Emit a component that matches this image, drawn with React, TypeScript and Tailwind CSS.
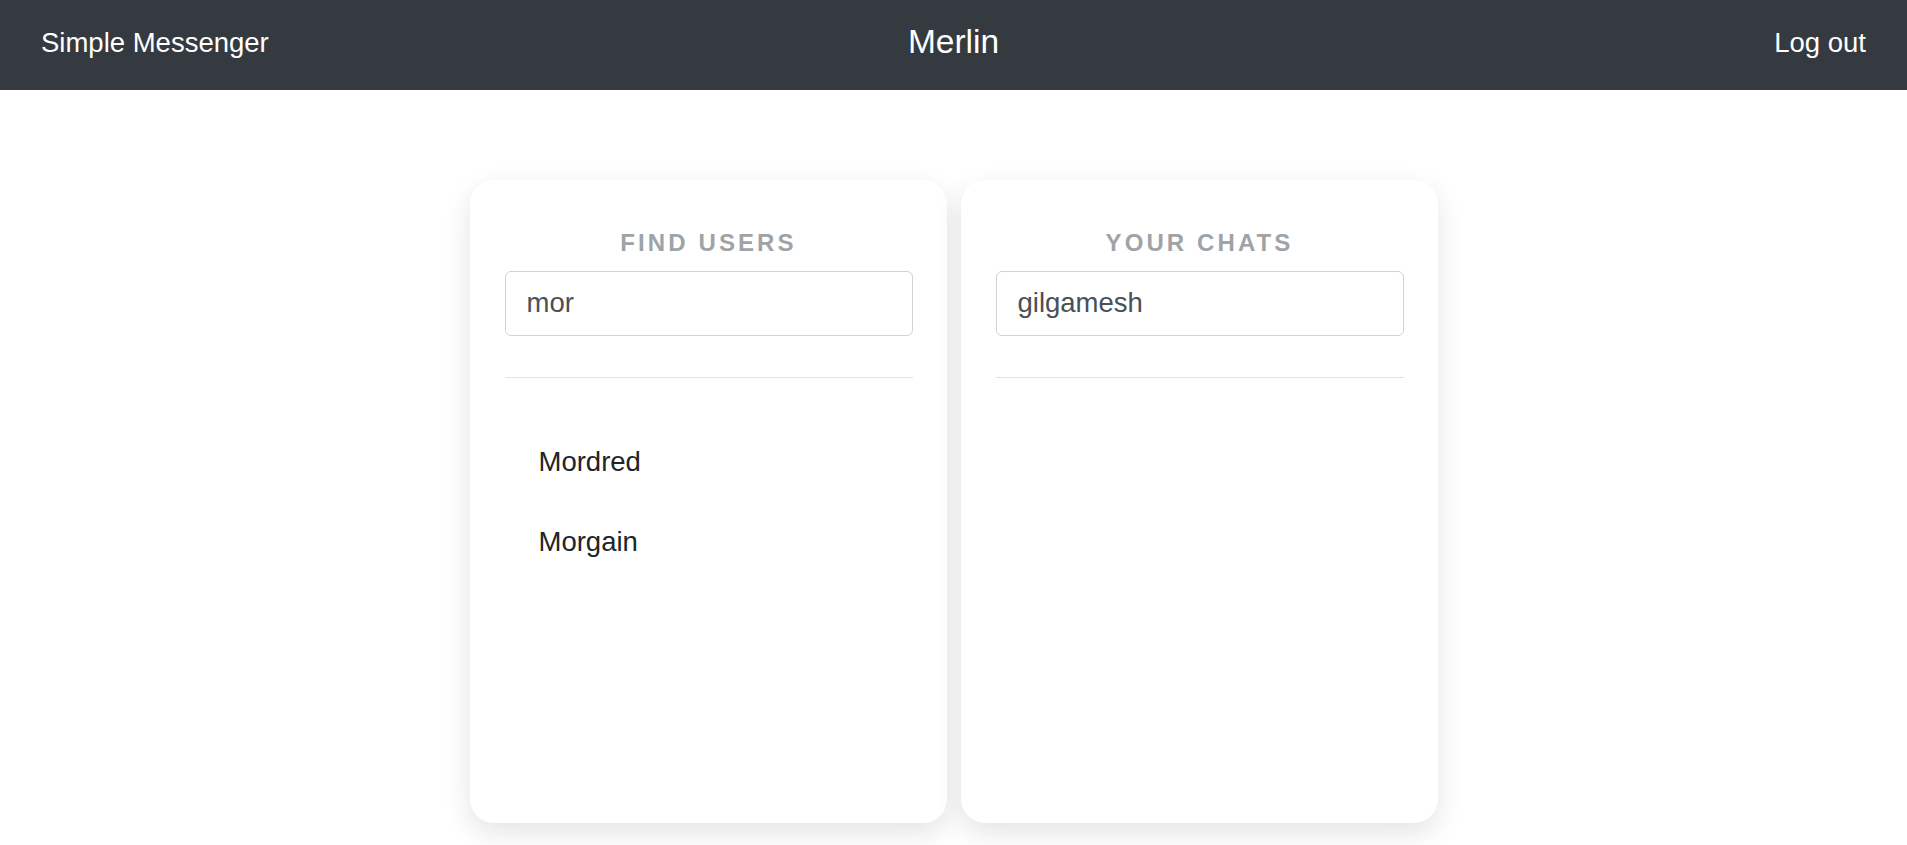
import { useState } from "react";

const font = { fontFamily: '"Liberation Sans", Arial, sans-serif' };

const Panel = ({
  title,
  value,
  items,
}: {
  title: string;
  value: string;
  items: string[];
}) => {
  const [query, setQuery] = useState(value);
  return (
    <div className="flex h-[643px] w-[477px] flex-col rounded-3xl bg-white pl-[35px] pr-[34px] pt-[49px] shadow-[0_10px_28px_rgba(0,0,0,0.11)]">
      {/* Panel heading */}
      <h2 className="text-center text-[24px] font-bold uppercase leading-[1.2] tracking-[3.1px] text-[#9ea3a7]">
        {title}
      </h2>
      <input
        value={query}
        onChange={(e) => setQuery(e.target.value)}
        className="mt-[13px] h-[65px] w-full rounded-[6px] border border-[#ced4da] px-[21px] text-[27.5px] leading-[1.5] text-[#495057] outline-none"
        style={font}
      />
      <div className="mt-[41px] border-t border-[#e4e4e4]"></div>
      <ul className="mt-[44px]">
        {items.map((name) => (
          <li
            key={name}
            className="px-[34px] py-[20px] text-[27.5px] leading-[1.47] text-[#212529]"
          >
            {name}
          </li>
        ))}
      </ul>
    </div>
  );
};

export default function App() {
  return (
    <div className="min-h-screen bg-white" style={font}>
      <header className="flex h-[90px] items-center justify-between bg-[#343a40] px-[41px] pb-[5px] text-white">
        <span className="w-[300px] text-[27.5px]">Simple Messenger</span>
        <span className="text-[33.5px]">Merlin</span>
        <span className="w-[300px] text-right text-[27.5px]">Log out</span>
      </header>
      <main className="mt-[90px] flex justify-center gap-[14px]">
        <Panel title="Find users" value="mor" items={["Mordred", "Morgain"]} />
        <Panel title="Your chats" value="gilgamesh" items={[]} />
      </main>
    </div>
  );
}
